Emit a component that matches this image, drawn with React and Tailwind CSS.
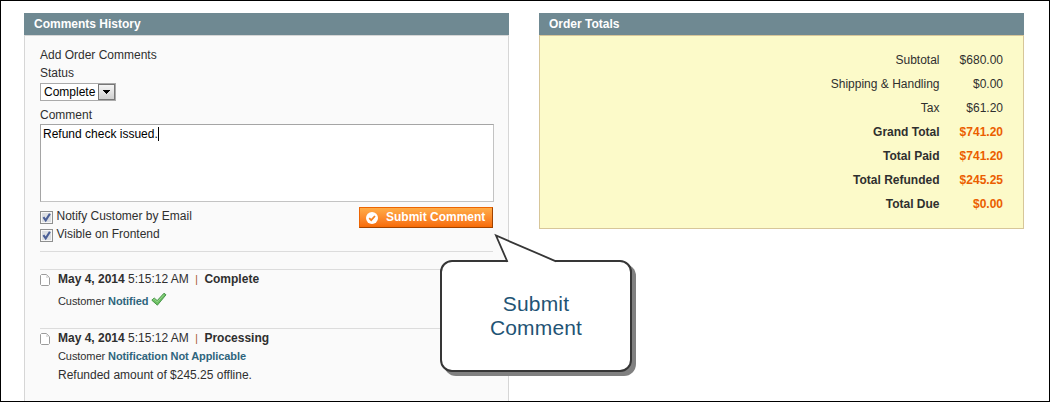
const totals = [
  { label: 'Subtotal', value: '$680.00' },
  { label: 'Shipping & Handling', value: '$0.00' },
  { label: 'Tax', value: '$61.20' },
  { label: 'Grand Total', value: '$741.20', strong: true },
  { label: 'Total Paid', value: '$741.20', strong: true },
  { label: 'Total Refunded', value: '$245.25', strong: true },
  { label: 'Total Due', value: '$0.00', strong: true },
];

function PanelHeader({ children }) {
  return (
    <h2 className="h-[22px] bg-[#6f8992] pl-[10px] text-[12px] leading-[22px] font-bold text-white">
      {children}
    </h2>
  );
}

function Checkbox({ children }) {
  return (
    <label className="flex h-[18px] items-start">
      <svg className="mt-1 mr-[3.5px] h-[13px] w-[13px] shrink-0" viewBox="0 0 13 13">
        <rect x="0.5" y="0.5" width="12" height="12" fill="#f8f8f8" stroke="#8e8f8f" />
        <rect x="2" y="2" width="9" height="9" fill="#dcdfe3" />
        <path d="M3.4 6.2 5.7 9.4 9.9 2.7" fill="none" stroke="#4a5f97" strokeWidth="2.1" />
      </svg>
      <span className="leading-[18px]">{children}</span>
    </label>
  );
}

function NoteIcon() {
  return (
    <svg className="mt-[4px] mr-2 h-[12px] w-[10px] shrink-0" viewBox="0 0 10 12">
      <path d="M1.5.5h4.8l3.2 3.2v6.8l-1 1h-7l-1-1v-9z" fill="#fff" stroke="#9b9b9b" />
      <path d="M6 1v3h3z" fill="#dedede" />
    </svg>
  );
}

function GreenTick() {
  return (
    <svg className="ml-[3px] h-4 w-4" viewBox="0 0 16 16">
      <path d="M.8 8.2 3.2 6l3 2.6L13 1.2l2 1.6-8.6 10.4z" fill="#6cbf62" stroke="#3f8f42" strokeWidth="0.9" strokeLinejoin="round" />
      <path d="M2.2 8 3.3 7.2l3 2.7L13 2.6" fill="none" stroke="#9bd890" strokeWidth="0.9" />
    </svg>
  );
}

function HistoryHeading({ status }) {
  return (
    <div className="flex h-[18px] leading-[19px] whitespace-nowrap">
      <NoteIcon />
      <p>
        <strong>May 4, 2014</strong> 5:15:12 AM<span className="mx-[6.5px] text-[10px] text-[#a4532c]">|</span>
        <strong>{status}</strong>
      </p>
    </div>
  );
}

function CommentsPanel() {
  return (
    <section className="flex w-[485px] shrink-0 flex-col">
      <PanelHeader>Comments History</PanelHeader>
      <div className="flex-1 border border-b-0 border-[#d6d6d6] bg-[#fafafa] pt-[10px] pr-[14px] pl-[15px]">
        <p className="h-[18px] leading-[18px]">Add Order Comments</p>
        <p className="h-[19px] leading-[18px]">Status</p>
        <div className="flex h-[18px] w-[76px] justify-between border border-[#aaa] bg-white pl-[3px] text-black">
          <span className="leading-[16px]">Complete</span>
          <span className="flex h-[16px] w-[17px] items-center justify-center border border-[#777] bg-gradient-to-b from-[#f5f5f5] to-[#cfcfcf]">
            <svg className="h-[4px] w-[7px]" viewBox="0 0 7 4" shapeRendering="crispEdges">
              <path d="M0 0h7L3.5 4z" fill="#000" />
            </svg>
          </span>
        </div>
        <p className="mt-[5px] h-[18px] leading-[18px]">Comment</p>
        <div className="flex h-[78px] w-[454px] border border-[#c3c3c3] border-t-[#a5a5a5] border-l-[#a5a5a5] bg-white pt-[1px] pl-[2px] text-black">
          <span className="leading-[17px]">Refund check issued.</span>
          <span className="mt-[1px] h-[14px] w-px bg-black" />
        </div>
        <div className="flex h-[50px] w-[453px] justify-between border-b border-[#dcdcdc] pt-[5px]">
          <div>
            <Checkbox>Notify Customer by Email</Checkbox>
            <Checkbox>Visible on Frontend</Checkbox>
          </div>
          <button className="flex h-[21px] w-[134px] items-center border border-[#ed6502] border-r-[#a04300] border-b-[#a04300] bg-gradient-to-b from-[#ffac47] to-[#f76b04] pl-[6px] font-bold text-white">
            <svg className="mr-2 h-[12px] w-[12px]" viewBox="0 0 12 12">
              <circle cx="6" cy="6" r="6" fill="#fff" />
              <path d="M3.2 6.2 5.2 8.1 9 4" fill="none" stroke="#f58220" strokeWidth="1.8" />
            </svg>
            <span className="-mt-px whitespace-nowrap">Submit Comment</span>
          </button>
        </div>
        <ul className="mt-[17px] w-[453px]">
          <li className="h-[59px] border-t border-[#dcdcdc]">
            <HistoryHeading status="Complete" />
            <div className="mt-[4px] ml-[18px] flex h-[18px] text-[11px] leading-[18px] tracking-[-0.08px]">
              <span>Customer <strong className="text-[#2f657d]">Notified</strong></span>
              <GreenTick />
            </div>
          </li>
          <li className="border-t border-[#dcdcdc]">
            <HistoryHeading status="Processing" />
            <p className="ml-[18px] h-[19px] text-[11px] leading-[18px] tracking-[-0.08px]">
              Customer <strong className="text-[#2f657d]">Notification Not Applicable</strong>
            </p>
            <p className="ml-[18px] h-[18px] leading-[18px]">Refunded amount of $245.25 offline.</p>
          </li>
        </ul>
      </div>
    </section>
  );
}

function TotalsPanel() {
  return (
    <section className="w-[485px] shrink-0">
      <PanelHeader>Order Totals</PanelHeader>
      <dl className="h-[194px] border border-[#d7c699] bg-[#fcfac9] pt-3 pr-5">
        {totals.map(({ label, value, strong }) => (
          <div key={label} className={strong ? 'flex h-6 justify-end leading-6 font-bold' : 'flex h-6 justify-end leading-6'}>
            <dt>{label}</dt>
            <dd className={strong ? 'w-[63.5px] text-right text-[#eb5e00]' : 'w-[63.5px] text-right'}>{value}</dd>
          </div>
        ))}
      </dl>
    </section>
  );
}

function Callout() {
  return (
    <div className="absolute top-[259px] left-[439px] flex h-[112px] w-[192px] items-center justify-center rounded-[12px] border-2 border-[#363636] bg-white text-center text-[21px] leading-6 tracking-[0.15px] text-[#1f5475] shadow-[4px_4px_0_#808080]">
      <svg className="absolute -top-[29px] left-[49px] h-[31px] w-[68px]" viewBox="0 0 68 31">
        <path d="M16.5 31V28L5 2.5 64 28v3z" fill="#fff" />
        <path d="M16.5 29 5 2.5 65 28.3" fill="none" stroke="#363636" strokeWidth="1.8" />
      </svg>
      <p>Submit<br />Comment</p>
    </div>
  );
}

export default function App() {
  return (
    <main className="relative flex h-[402px] w-[1050px] gap-[30px] overflow-hidden border border-black bg-white pt-3 pl-[23px] font-['Liberation_Sans',Arial,sans-serif] text-[12px] text-[#2f2f2f]">
      <CommentsPanel />
      <TotalsPanel />
      <Callout />
    </main>
  );
}
